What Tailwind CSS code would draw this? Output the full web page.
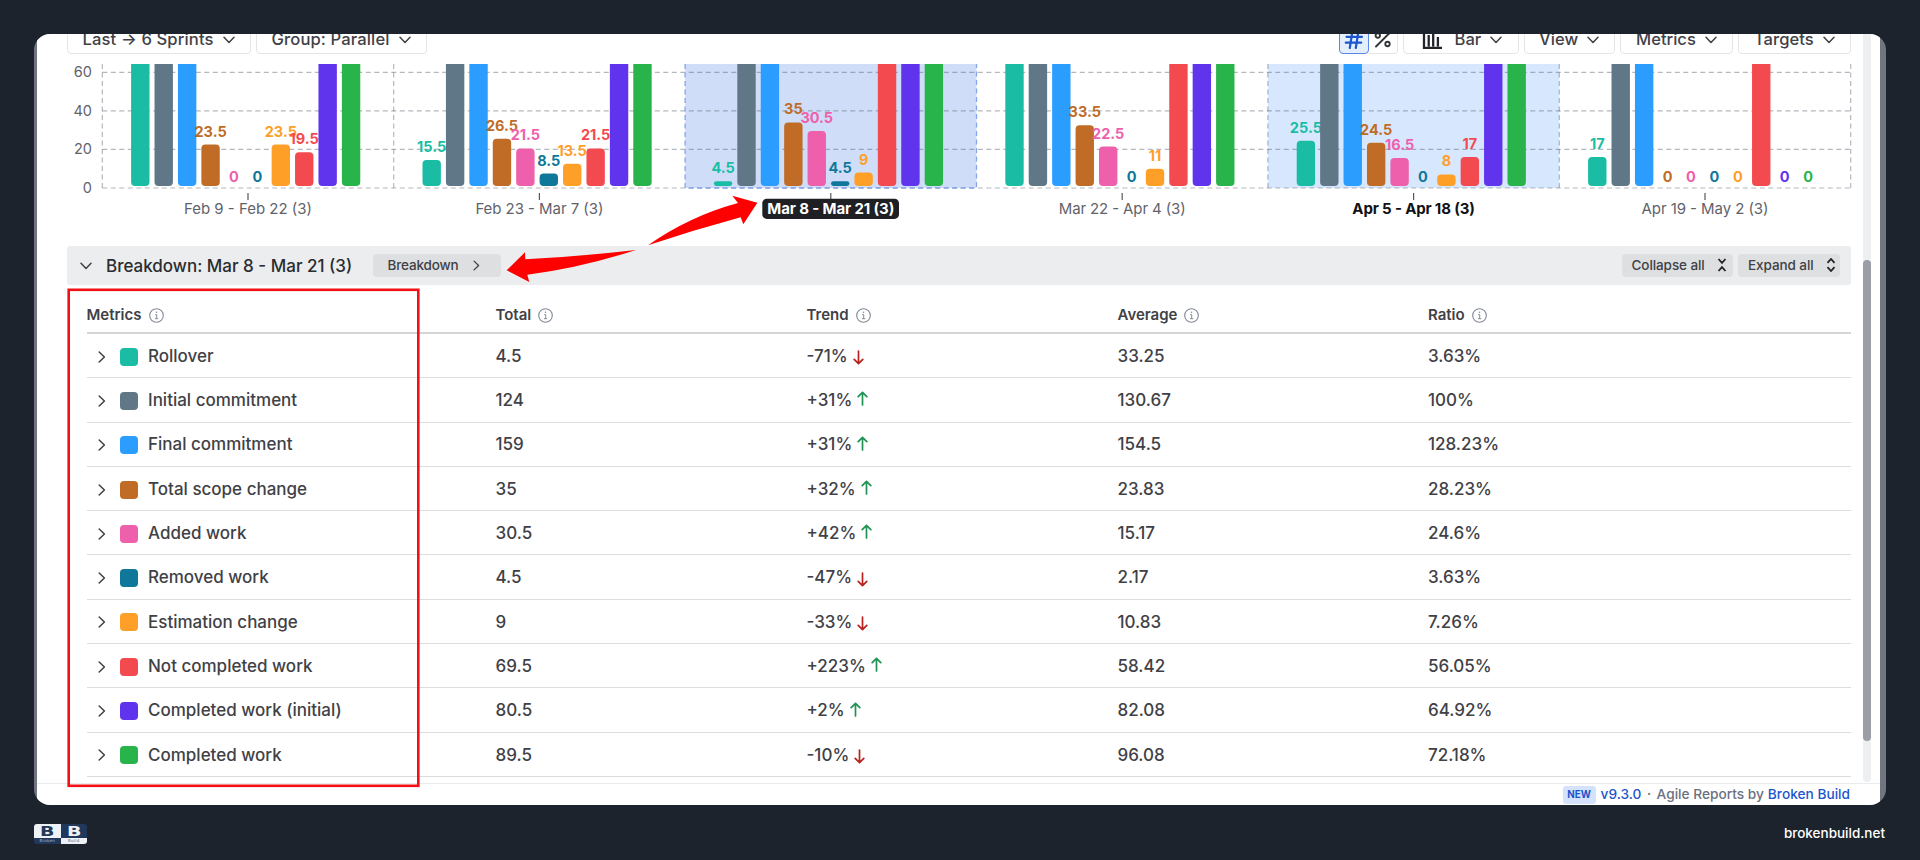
<!DOCTYPE html>
<html lang="en">
<head>
<meta charset="utf-8">
<title>Agile Reports</title>
<script src="https://cdn.jsdelivr.net/npm/@tailwindcss/browser@4"></script>
</head>
<body class="bg-[#1c232c] w-[1920px] h-[860px] overflow-hidden font-['Inter',sans-serif] text-[#3f4146]">
<svg class="hidden">
  <symbol id="down" viewBox="0 0 12 8"><path d="M1 1.200 6 6.400 11 1.200" fill="none" stroke="currentColor" stroke-width="1.500" stroke-linecap="round" stroke-linejoin="round"/></symbol>
  <symbol id="right" viewBox="0 0 8 12"><path d="M1.200 1 6.400 6 1.200 11" fill="none" stroke="currentColor" stroke-width="1.500" stroke-linecap="round" stroke-linejoin="round"/></symbol>
  <symbol id="info" viewBox="0 0 15 15"><circle cx="7.500" cy="7.500" r="6.800" fill="none" stroke="currentColor" stroke-width="1.100"/><path d="M6.200 6.600h1.500v4M6 10.700h3.200" fill="none" stroke="currentColor" stroke-width="1"/><circle cx="7.500" cy="4.300" r=".8" fill="currentColor"/></symbol>
  <symbol id="arrow" viewBox="0 0 11 15"><path d="M5.500 14V1.500M1.200 5.700 5.500 1.300 9.800 5.700" fill="none" stroke="currentColor" stroke-width="1.700" stroke-linecap="round" stroke-linejoin="round"/></symbol>
</svg>

<div class="relative mt-[34px] ml-[34px] w-[1852px] h-[771px] rounded-[16px] overflow-hidden bg-[#71757f] pl-[3px] pr-[6px]">
  <div class="relative h-full bg-white flex flex-col">

    <div class="h-5 flex items-end justify-between pl-[29.500px] pr-[29.500px] text-[16.600px] font-medium">
      <div class="flex gap-[5px]">
        <button class="w-[184px] h-[27px] border border-[#e4e5e7] rounded-[4px] pl-[15px] pb-[2px] flex items-center gap-[9px]"><span class="whitespace-nowrap tracking-[0.120px]">Last → 6 Sprints</span><svg class="w-3 h-2"><use href="#down"/></svg></button>
        <button class="w-[171px] h-[27px] border border-[#e4e5e7] rounded-[4px] pl-[15px] pb-[2px] flex items-center gap-[9px]"><span class="whitespace-nowrap tracking-[0.120px]">Group: Parallel</span><svg class="w-3 h-2"><use href="#down"/></svg></button>
      </div>
      <div class="flex gap-[5px]">
        <div class="flex">
          <button class="w-[30px] h-[27px] border border-[#5c87e6] bg-[#e4effd] rounded-[4px] flex items-center justify-center text-[#1d55cc] pb-[2px]"><svg class="w-5 h-5" viewBox="0 0 20 20"><path d="M8.300 2 5.800 18M14.300 2 11.800 18M2.500 6.800H18M1.800 12.700H17.200" stroke="currentColor" stroke-width="2.200" stroke-linecap="round"/></svg></button>
          <button class="w-[29.500px] h-[27px] border border-l-0 border-[#e4e5e7] rounded-r-[4px] flex items-center pl-1 pb-[2px]"><svg class="w-5 h-5" viewBox="0 0 20 20" fill="none" stroke="#333539" stroke-width="1.900"><path d="M3 16.500 16 3.500" stroke-linecap="round"/><circle cx="4.800" cy="5.500" r="2.200"/><circle cx="14.500" cy="14" r="2.200"/></svg></button>
        </div>
        <button class="w-[116px] h-[27px] border border-[#e4e5e7] rounded-[4px] pl-[18px] pb-[2px] flex items-center gap-[8.500px]"><svg class="w-5 h-5 mr-1" viewBox="0 0 20 20" fill="none" stroke="#222428" stroke-width="2.300"><path d="M2 0v17.800H20M6.700 5v11.500M11.200 2v14.500M15.900 7v9.500"/></svg><span>Bar</span><svg class="w-3 h-2"><use href="#down"/></svg></button>
        <button class="w-[91px] h-[27px] border border-[#e4e5e7] rounded-[4px] pl-[14px] pb-[2px] flex items-center gap-[9px]"><span>View</span><svg class="w-3 h-2"><use href="#down"/></svg></button>
        <button class="w-[113px] h-[27px] border border-[#e4e5e7] rounded-[4px] pl-[15px] pb-[2px] flex items-center gap-[9px]"><span>Metrics</span><svg class="w-3 h-2"><use href="#down"/></svg></button>
        <button class="w-[112.500px] h-[27px] border border-[#e4e5e7] rounded-[4px] pl-[15px] pb-[2px] flex items-center gap-[9px]"><span>Targets</span><svg class="w-3 h-2"><use href="#down"/></svg></button>
      </div>
    </div>

    <svg id="chart" class="w-[1843px] h-[192px] shrink-0" viewBox="37 54 1843 192"></svg>

    <div class="ml-[30px] w-[1783.500px] h-[38.500px] shrink-0 rounded-[3px] bg-[#ebedee] flex items-center pl-[13px] pr-[10.500px]">
      <svg class="w-3 h-2 mt-[2px]"><use href="#down"/></svg>
      <span class="ml-[14px] mt-[2px] w-[266.500px] text-[17px] font-medium text-[#2a2c30] whitespace-nowrap">Breakdown: Mar 8 - Mar 21 (3)</span>
      <button class="w-[128px] h-[23px] rounded-[4px] bg-[#dddfe1] pl-[15px] flex items-center gap-[14px] text-[13.500px] tracking-[-0.150px] font-medium"><span>Breakdown</span><svg class="w-[7px] h-[11px]"><use href="#right"/></svg></button>
      <div class="ml-auto flex gap-[5px] text-[13.500px] tracking-[-0.080px] font-medium">
        <button class="w-[111.500px] h-[23px] rounded-[4px] bg-[#dddfe1] pl-[10px] flex items-center gap-[12.500px]"><span class="whitespace-nowrap">Collapse all</span><svg class="w-[10px] h-[14px]" viewBox="0 0 10 14" fill="none" stroke="#222428" stroke-width="1.800"><path d="M1.500 1 5 4.800 8.500 1M1.500 13 5 9.200 8.500 13"/></svg></button>
        <button class="w-[102px] h-[23px] rounded-[4px] bg-[#dddfe1] pl-[10px] flex items-center gap-[12.500px]"><span class="whitespace-nowrap">Expand all</span><svg class="w-[10px] h-[14px]" viewBox="0 0 10 14" fill="none" stroke="#222428" stroke-width="1.800"><path d="M1.500 4.800 5 1 8.500 4.800M1.500 9.200 5 13 8.500 9.200"/></svg></button>
      </div>
    </div>

    <div class="ml-[49.500px] w-[1764px] shrink-0">
      <div class="h-[49.500px] pt-[14px] border-b-2 border-[#d4d5d7] grid grid-cols-[409px_311px_311px_310.500px_1fr] items-center text-[15px] font-semibold">
        <div class="flex items-center gap-[7px]"><span>Metrics</span><svg class="w-[15px] h-[15px] text-[#858a97]"><use href="#info"/></svg></div>
        <div class="flex items-center gap-[7px]"><span>Total</span><svg class="w-[15px] h-[15px] text-[#858a97]"><use href="#info"/></svg></div>
        <div class="flex items-center gap-[7px]"><span>Trend</span><svg class="w-[15px] h-[15px] text-[#858a97]"><use href="#info"/></svg></div>
        <div class="flex items-center gap-[7px]"><span>Average</span><svg class="w-[15px] h-[15px] text-[#858a97]"><use href="#info"/></svg></div>
        <div class="flex items-center gap-[7px]"><span>Ratio</span><svg class="w-[15px] h-[15px] text-[#858a97]"><use href="#info"/></svg></div>
      </div>
      <div id="rows"></div>
    </div>

    <div class="mt-auto h-[22.500px] pt-px border-t border-[#e9ebec] flex items-center justify-end pr-[30px] text-[13.700px] text-[#6b7080] font-medium">
      <span class="w-[33px] h-[18px] rounded-[3px] bg-[#d4e2fb] text-[#1d55cc] text-[9.800px] font-bold text-center leading-[18px] mr-[5px]">NEW</span>
      <span class="text-[#1d55cc]">v9.3.0</span><span class="px-[5.500px]">·</span><span>Agile Reports by</span><span class="text-[#1d55cc] ml-1">Broken Build</span>
    </div>

    <div class="absolute right-[9.500px] top-0 w-[7.500px] h-[748px] bg-[#edeff0] rounded-b"><div class="mt-[226px] h-[481px] rounded bg-[#9b9da7]"></div></div>
  </div>
</div>

<div class="flex items-start justify-between pl-[34px] pr-[35px] pt-[18.500px]">
  <div class="w-[53px] h-[20px] rounded-[3px] overflow-hidden grid grid-cols-2 grid-rows-[14.500px_5.500px] text-center font-['DejaVu_Sans'] font-bold">
    <div class="bg-[#eef1f5] text-[#22385a] text-[14px] leading-[15px]"><div class="scale-x-135">B</div></div>
    <div class="bg-[#22385a] text-[#eef1f5] text-[14px] leading-[15px]"><div class="scale-x-135">B</div></div>
    <div class="bg-[#22385a] text-[#aab6c8] text-[4px] leading-[5px] tracking-[0.300px] font-medium">Broken</div>
    <div class="bg-[#eef1f5] text-[#5a6a82] text-[4px] leading-[5px] tracking-[0.300px] font-medium">Build</div>
  </div>
  <span class="text-white text-[13.500px] leading-[19px] font-medium">brokenbuild.net</span>
</div>

<svg class="absolute left-0 top-0 w-[1920px] h-[860px] pointer-events-none" viewBox="0 0 1920 860">
  <rect x="68.700" y="289.800" width="349.600" height="496" fill="none" stroke="#f01016" stroke-width="2.600"/>
  <path fill="#fe0000" d="M757.400 202.700 732.300 195.800 738 203Q690 216 648 245.200Q694 230 740.700 217.300L743.300 224.300Z"/>
  <path fill="#fe0000" d="M506.700 270.300 525 252.300 525.300 259.300Q580 256.500 636 250Q580 268 527.300 274.700L529.300 282Z"/>
</svg>

<script>
const colors = ['#1abda4','#5f7787','#2a9dff','#c06c26','#ee60ab','#0f789a','#fe9f28','#f34a50','#6034ec','#29b34b'];
const names = ['Rollover','Initial commitment','Final commitment','Total scope change','Added work','Removed work','Estimation change','Not completed work','Completed work (initial)','Completed work'];
const data = [['4.5','-71%','33.25','3.63%'],['124','+31%','130.67','100%'],['159','+31%','154.5','128.23%'],['35','+32%','23.83','28.23%'],['30.5','+42%','15.17','24.6%'],['4.5','-47%','2.17','3.63%'],['9','-33%','10.83','7.26%'],['69.5','+223%','58.42','56.05%'],['80.5','+2%','82.08','64.92%'],['89.5','-10%','96.08','72.18%']];
document.getElementById('rows').innerHTML = names.map((n, i) => {
  const d = data[i];
  const icon = d[1][0] === '-' ? '<svg class="w-[11px] h-[15px] mt-[2px] text-[#b8211c] rotate-180"><use href="#arrow"/></svg>' : '<svg class="w-[11px] h-[15px] -mt-[4px] text-[#1f9254]"><use href="#arrow"/></svg>';
  return `<div class="h-[44.300px] pt-[2px] border-b-[1.500px] border-[#dcdddf] grid grid-cols-[409px_311px_311px_310.500px_1fr] items-center text-[17px] font-medium">
    <div class="flex items-center pl-[11px]"><svg class="w-2 h-3"><use href="#right"/></svg><span class="ml-[14.500px] mr-[10px] w-[18px] h-[18px] rounded-[4px]" style="background:${colors[i]}"></span><span>${n}</span></div>
    <span>${d[0]}</span><div class="flex items-center gap-[5px]"><span>${d[1]}</span>${icon}</div><span>${d[2]}</span><span>${d[3]}</span></div>`;
}).join('');

const X0 = 102.3, GW = 291.4, T = 80;
const groups = [
  ['Feb 9 - Feb 22 (3)', 128, [T,T,T,23.5,0,0,23.5,19.5,T,T]],
  ['Feb 23 - Mar 7 (3)', 128, [15.5,T,T,26.5,21.5,8.5,13.5,21.5,T,T]],
  ['Mar 8 - Mar 21 (3)', 127, [4.5,T,T,35,30.5,4.5,9,T,T,T]],
  ['Mar 22 - Apr 4 (3)', 127, [T,T,T,33.5,22.5,0,11,T,T,T]],
  ['Apr 5 - Apr 18 (3)', 122.5, [25.5,T,T,24.5,16.5,0,8,17,T,T]],
  ['Apr 19 - May 2 (3)', 127, [17,T,T,0,0,0,0,T,0,0]]
];
let s = '<defs><clipPath id="plot"><rect x="100" y="64" width="1760" height="130"/></clipPath></defs>';
s += `<rect x="${X0+GW*2}" y="64" width="${GW}" height="124" fill="#cfddf8"/><rect x="${X0+GW*4}" y="64" width="${GW}" height="124" fill="#d7e8fe"/>`;
s += '<g stroke="#5c6370" stroke-opacity=".46" stroke-width="1.200" stroke-dasharray="5 3.500">';
[72.4,110.8,149.4,188].forEach(y => s += `<path d="M${X0} ${y}H1850.700"/>`);
for (let i = 0; i < 7; i++) if (i !== 2 && i !== 3) s += `<path d="M${X0+GW*i} 64V188"/>`;
s += '</g>';
s += `<path d="M${X0+GW*2} 64V188H${X0+GW*3}V64" fill="none" stroke="#86a5ea" stroke-width="1.300" stroke-dasharray="5 3.500"/>`;
s += '<g font-size="14.500" fill="#5f636b" text-anchor="end">';
[['60',77.4],['40',115.9],['20',154.4],['0',192.6]].forEach(([t,y]) => s += `<text x="92" y="${y}">${t}</text>`);
s += '</g><g clip-path="url(#plot)" font-size="14.500" font-weight="700" text-anchor="middle">';
for (let j = 0; j < 10; j++) {
  groups.forEach((g, i) => {
    const v = g[2][j], x = 131.1 + GW*i + 23.42*j, y = v === T ? 50 : 189.9 - 1.928*v;
    if (v) s += `<rect x="${x}" y="${y}" width="18.400" height="${186-y}" rx="${Math.min(4,(186-y)/2)}" fill="${colors[j]}"/>`;
  });
  groups.forEach((g, i) => {
    const v = g[2][j];
    if (v !== T) s += `<text x="${140.3 + GW*i + 23.42*j}" y="${181.9 - 1.928*v}" fill="${colors[j]}">${v}</text>`;
  });
}
s += '</g><g font-size="15" text-anchor="middle">';
groups.forEach((g, i) => {
  const c = X0 + GW*(i+.5);
  s += `<path d="M${c} 193v7" stroke="#55585f" stroke-width="1.200"/>`;
  if (i === 2) s += `<rect x="762.300" y="198.700" width="136.700" height="20.200" rx="4.500" fill="#1e2024"/>`;
  s += `<text x="${c}" y="214.400" textLength="${g[1]}" ${i===2?'fill="#fff" font-weight="700"':i===4?'fill="#101114" font-weight="700"':'fill="#5f636b"'}>${g[0]}</text>`;
});
document.getElementById('chart').innerHTML = s + '</g>';
</script>
</body>
</html>
